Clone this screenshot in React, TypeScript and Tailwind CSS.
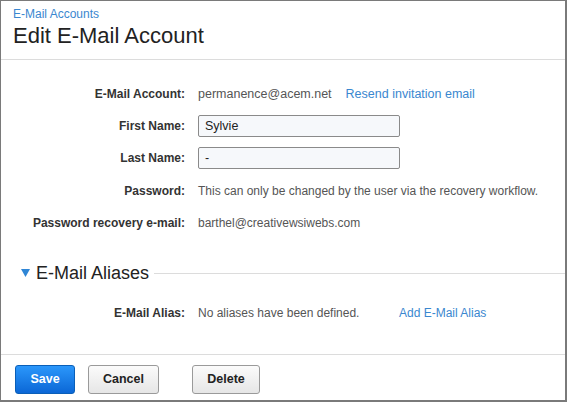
import React from "react";

export default function App() {
  const label = "text-right font-bold text-[12px] text-[#333]";
  return (
    <div
      className="w-[567px] h-[402px] bg-white border-l border-t border-r-2 border-b-2 border-[#7a7a7a] flex flex-col text-[12px] text-[#555] overflow-hidden"
      style={{ fontFamily: '"Liberation Sans", Arial, sans-serif' }}
    >
      <div className="px-[12px] pt-[6px] pb-[10px] border-b border-[#dcdcdc]">
        <div className="text-[12px] text-[#3a87cf] leading-[15px]">E-Mail Accounts</div>
        <div className="text-[22px] text-[#222] leading-[26px] mt-[1px]">Edit E-Mail Account</div>
      </div>

      <div className="grid grid-cols-[184px_1fr] gap-x-[13px] mt-[18px] items-center">
        <div className={`${label} h-[32px] leading-[32px]`}>E-Mail Account:</div>
        <div className="h-[32px] flex items-center">
          <span className="text-[12.5px]">permanence@acem.net</span>
          <span className="ml-[14px] text-[12.5px] text-[#3a87cf]">Resend invitation email</span>
        </div>

        <div className={`${label} h-[32px] leading-[32px]`}>First Name:</div>
        <div className="h-[32px] flex items-center">
          <div className="w-[202px] h-[22px] border border-[#8a8a8a] rounded-[2px] bg-[#f6f8fb] px-[6px] flex items-center text-[#222] text-[12.5px]">
            Sylvie
          </div>
        </div>

        <div className={`${label} h-[32px] leading-[32px]`}>Last Name:</div>
        <div className="h-[32px] flex items-center">
          <div className="w-[202px] h-[22px] border border-[#8a8a8a] rounded-[2px] bg-[#f6f8fb] px-[6px] flex items-center text-[#222] text-[12.5px]">
            -
          </div>
        </div>

        <div className={`${label} h-[32px] leading-[32px] mt-[1px]`}>Password:</div>
        <div className="h-[32px] flex items-center mt-[1px]">This can only be changed by the user via the recovery workflow.</div>

        <div className={`${label} h-[32px] leading-[32px]`}>Password recovery e-mail:</div>
        <div className="h-[32px] flex items-center">barthel@creativewsiwebs.com</div>
      </div>

      <div className="flex items-center mt-[23px] pl-[20px]">
        <svg width="9" height="8" viewBox="0 0 9 8" className="mr-[6px]">
          <polygon points="0,0 9,0 4.5,8" fill="#2f86d6" />
        </svg>
        <span className="text-[18px] text-[#222] leading-[22px]">E-Mail Aliases</span>
        <div className="flex-1 h-px bg-[#dcdcdc] ml-[5px]" />
      </div>

      <div className="grid grid-cols-[184px_1fr] gap-x-[13px] mt-[13px] items-center">
        <div className={`${label} h-[32px] leading-[32px]`}>E-Mail Alias:</div>
        <div className="h-[32px] flex items-center">
          <span className="w-[201px]">No aliases have been defined.</span>
          <span className="text-[#3a87cf]">Add E-Mail Alias</span>
        </div>
      </div>

      <div className="mt-auto border-t border-[#dcdcdc] h-[46px] flex items-start px-[14px] pt-[10px]">
        <button className="w-[60px] h-[29px] rounded-[3px] border border-[#0a5fb8] bg-gradient-to-b from-[#2b97fb] to-[#0b67d6] text-white font-bold text-[12.5px]">
          Save
        </button>
        <button className="ml-[13px] w-[71px] h-[29px] rounded-[3px] border border-[#9a9a9a] bg-gradient-to-b from-[#fbfbfb] to-[#e6e6e6] text-[#222] font-bold text-[12.5px]">
          Cancel
        </button>
        <button className="ml-[33px] w-[68px] h-[29px] rounded-[3px] border border-[#9a9a9a] bg-gradient-to-b from-[#fbfbfb] to-[#e6e6e6] text-[#222] font-bold text-[12.5px]">
          Delete
        </button>
      </div>
    </div>
  );
}
